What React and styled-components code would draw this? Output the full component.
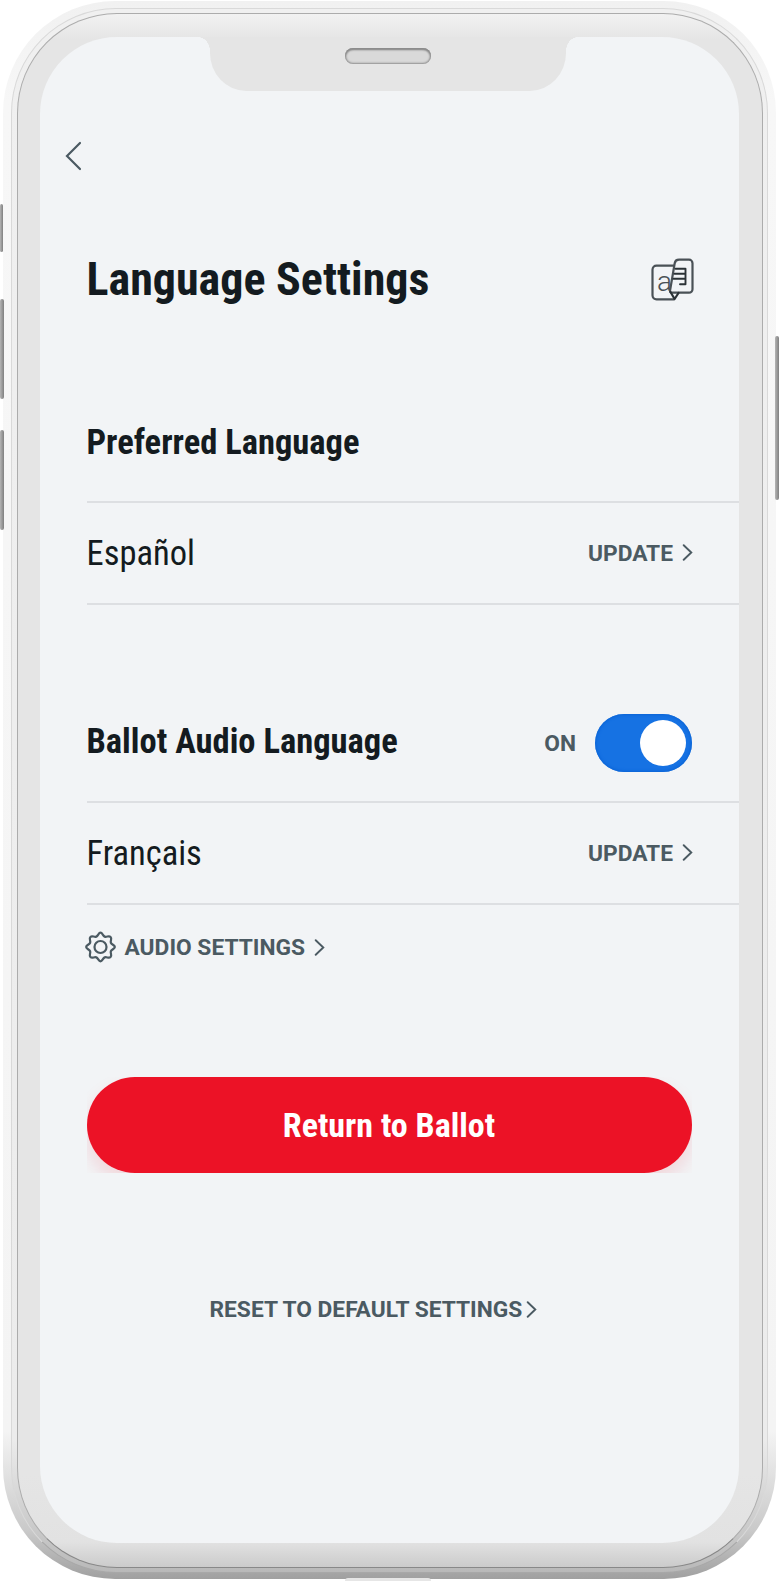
import React from 'react';
import styled, { createGlobalStyle } from 'styled-components';

const ink = '#141b20';
const slate = '#4b5a62';

const GlobalStyle = createGlobalStyle`
  * { box-sizing: border-box; }
  html, body { margin: 0; background: #fff; }
  body { font-family: 'Roboto Condensed', Roboto, sans-serif; overflow: hidden; }
  button { font: inherit; border: 0; padding: 0; background: none; }
`;

const Stage = styled.div`
  position: relative;
  width: 780px;
  height: 1581px;
  padding: 1px 4px 2px 3px;
`;

const SideKey = styled.span`
  position: absolute;
  left: ${(p) => p.$left}px;
  top: ${(p) => p.$top}px;
  width: ${(p) => p.$width || 4}px;
  height: ${(p) => p.$height}px;
  border-radius: 2px;
  background: linear-gradient(90deg, #b5b5b5, #808080);
`;

const Port = styled.span`
  position: absolute;
  left: 345px;
  top: 1578px;
  width: 86px;
  height: 3px;
  border-radius: 3px 3px 0 0;
  background: #e6e6e6;
`;

const Shell = styled.div`
  width: 773px;
  height: 1578px;
  padding: 7px 8px 6px;
  border-radius: 112px;
  background: linear-gradient(180deg, #f1f1f1 0, #f7f7f7 100px, #f4f4f4 1430px, #c9c9c9 1530px, #a0a0a0 100%);
`;

const Rim = styled.div`
  height: 100%;
  padding: 4px 4px 4px 5px;
  border: 1px solid #d9d9d9;
  border-bottom-color: #a8a8a8;
  border-radius: 105px;
  background: linear-gradient(180deg, #f0f0f0, #ececec 1430px, #b9b9b9 100%);
`;

const Bezel = styled.div`
  height: 100%;
  padding: 23px 23px 24px 22px;
  border: 1px solid #acacac;
  border-bottom-color: #888;
  border-radius: 100px;
  background: linear-gradient(180deg, #f2f2f2 0, #e5e5e5 25px, #e5e5e5 1460px, #e2e2e2 1528px, #cbcbcb 100%);
`;

const Screen = styled.main`
  position: relative;
  height: 100%;
  border-radius: 77px;
  background: #f2f4f6;
  overflow: hidden;
  display: flex;
  flex-direction: column;
`;

const Notch = styled.div`
  position: absolute;
  top: 0;
  left: 170px;
  width: 356px;
  height: 53.5px;
  border-radius: 0 0 36px 36px / 0 0 38px 38px;
  background: #e5e5e5;
  &::before, &::after {
    content: '';
    position: absolute;
    top: 0;
    width: 12px;
    height: 14px;
  }
  &::before { right: 100%; background: radial-gradient(ellipse 12px 14px at 0 100%, transparent 98%, #e5e5e5 100%); }
  &::after { left: 100%; background: radial-gradient(ellipse 12px 14px at 100% 100%, transparent 98%, #e5e5e5 100%); }
`;

const Speaker = styled.div`
  width: 86px;
  height: 16px;
  margin: 10.5px auto 0;
  border-radius: 8px;
  background: #d9d9d9;
  box-shadow: inset 0 0 2px 1px #8f8f8f, inset 0 2px 2px #808080;
`;

const BackButton = styled.button`
  display: flex;
  width: 24px;
  height: 34px;
  margin: 102px 0 0 22px;
`;

const Content = styled.div`
  display: flex;
  flex-direction: column;
  padding-left: 46.5px;
`;

const Row = styled.div`
  display: flex;
  align-items: center;
  justify-content: space-between;
  height: ${(p) => p.$height}px;
  padding: ${(p) => p.$top || 0}px ${(p) => p.$right || 46}px 0 0;
  border-bottom: ${(p) => (p.$rule ? '2px solid #dddfe2' : '0')};
`;

const Label = styled.span`
  display: block;
  padding-top: ${(p) => p.$drop || 0}px;
  padding-bottom: ${(p) => p.$lift || 0}px;
  color: ${(p) => p.$color || ink};
  font-size: ${(p) => p.$size || 34.5}px;
  font-weight: ${(p) => p.$weight || 700};
  line-height: 1.2;
  white-space: nowrap;
`;

const Caps = styled.span`
  padding-top: 1.5px;
  color: ${slate};
  font-family: Roboto, sans-serif;
  font-size: 22.75px;
  font-weight: 700;
  line-height: 1.2;
  white-space: nowrap;
`;

const Link = styled.button`
  display: flex;
  align-items: center;
  gap: 9px;
`;

const AudioLink = styled(Link)`
  gap: 8.5px;
  margin-left: -1.5px;
`;

const ToggleGroup = styled.div`
  display: flex;
  align-items: center;
  gap: 19px;
`;

const Toggle = styled.span`
  display: flex;
  justify-content: flex-end;
  width: 97px;
  height: 58px;
  padding: 6px;
  border-radius: 29px;
  background: #1672e3;
  box-shadow: inset 0 0 3px 1px #0b64d6;
`;

const Knob = styled.span`
  width: 46px;
  height: 46px;
  border-radius: 50%;
  background: #fff;
`;

const ButtonArea = styled.div`
  width: 605px;
  height: 96px;
  margin-top: 88px;
  overflow: hidden;
`;

const ReturnButton = styled.button`
  display: flex;
  align-items: center;
  justify-content: center;
  width: 100%;
  height: 100%;
  border-radius: 48px;
  background: #ec1226;
  box-shadow: 0 10px 18px rgba(236, 18, 38, 0.13);
`;

const ResetLink = styled(Link)`
  gap: 4px;
  height: 34px;
  margin: 119px 0 0 123px;
`;

const Chevron = () => (
  <svg width="11" height="17" viewBox="0 0 11 17" fill="none" stroke={slate} strokeWidth="1.9" strokeLinecap="round">
    <path d="M1.7 1.2 9.3 8.5 1.7 15.8" />
  </svg>
);

const Gear = () => (
  <svg width="31" height="32" viewBox="0 0 32 32" fill="none" stroke={slate} strokeWidth="2.3" strokeLinejoin="round">
    <path d="M16 1.2C18 1.2 18.4 4.5 20.4 5.3S24.6 3.8 26.4 5.6 25.9 9.6 26.7 11.6 30.8 14 30.8 16 27.5 18.4 26.7 20.4 28.2 24.6 26.4 26.4 22.4 25.9 20.4 26.7 18 30.8 16 30.8 13.6 27.5 11.6 26.7 7.4 28.2 5.6 26.4 6.1 22.4 5.3 20.4 1.2 18 1.2 16 4.5 13.6 5.3 11.6 3.8 7.4 5.6 5.6 9.6 6.1 11.6 5.3 14 1.2 16 1.2Z" />
    <circle cx="16" cy="16" r="6.2" />
  </svg>
);

const Translate = () => (
  <svg width="43" height="43" viewBox="0 0 43 43" fill="none" stroke="#4a5156" strokeWidth="2.2" strokeLinejoin="round" strokeLinecap="round">
    <path d="M23 7.7H5.5a4 4 0 0 0-4 4V37.3a4 4 0 0 0 4 4H23" />
    <path d="M28 1.7H38a3.5 3.5 0 0 1 3.5 3.5V31.2a3.5 3.5 0 0 1-3.5 3.5H21c-1.7 0-2.2-.8-1.9-2.5L23.7 5.2c.4-2.2 1.8-3.5 4.3-3.5Z" />
    <path d="M19.5 34 23.6 41 27.5 35" stroke="#2b3236" />
    <path d="M24.5 10.7H34.5V26.3H29M23.5 15.7H34.5M22.5 20.7H34.5" stroke="#2b3236" strokeWidth="1.9" />
    <text x="6" y="32.5" fill="#4a5156" stroke="none" fontFamily="Roboto, sans-serif" fontWeight="300" fontSize="28">a</text>
  </svg>
);

const UpdateLink = () => (
  <Link>
    <Caps>UPDATE</Caps>
    <Chevron />
  </Link>
);

export default function App() {
  return (
    <>
      <GlobalStyle />
      <Stage>
        <SideKey $left={0} $top={204} $width={3} $height={48} />
        <SideKey $left={0} $top={299} $height={100} />
        <SideKey $left={0} $top={430} $height={100} />
        <SideKey $left={775} $top={336} $height={164} />
        <Shell>
          <Rim>
            <Bezel>
              <Screen>
                <Notch>
                  <Speaker />
                </Notch>
                <BackButton aria-label="Back">
                  <svg width="24" height="34" viewBox="0 0 24 34" fill="none" stroke={slate} strokeWidth="2.2" strokeLinecap="round">
                    <path d="M18 4 5 17 18 30" />
                  </svg>
                </BackButton>
                <Content>
                  <Row $height={210} $top={2} $right={45}>
                    <Label $size={46} $drop={2}>Language Settings</Label>
                    <Translate />
                  </Row>
                  <Row $height={120} $rule>
                    <Label $drop={2}>Preferred Language</Label>
                  </Row>
                  <Row $height={102} $rule>
                    <Label $weight={400} $drop={2}>Español</Label>
                    <UpdateLink />
                  </Row>
                  <Row $height={198} $top={80} $right={47} $rule>
                    <Label $lift={2}>Ballot Audio Language</Label>
                    <ToggleGroup>
                      <Caps>ON</Caps>
                      <Toggle>
                        <Knob />
                      </Toggle>
                    </ToggleGroup>
                  </Row>
                  <Row $height={102} $rule>
                    <Label $weight={400} $drop={1}>Français</Label>
                    <UpdateLink />
                  </Row>
                  <Row $height={84}>
                    <AudioLink>
                      <Gear />
                      <Caps>AUDIO SETTINGS</Caps>
                      <Chevron />
                    </AudioLink>
                  </Row>
                  <ButtonArea>
                    <ReturnButton>
                      <Label $size={34} $color="#fff">Return to Ballot</Label>
                    </ReturnButton>
                  </ButtonArea>
                  <ResetLink>
                    <Caps>RESET TO DEFAULT SETTINGS</Caps>
                    <Chevron />
                  </ResetLink>
                </Content>
              </Screen>
            </Bezel>
          </Rim>
        </Shell>
        <Port />
      </Stage>
    </>
  );
}
